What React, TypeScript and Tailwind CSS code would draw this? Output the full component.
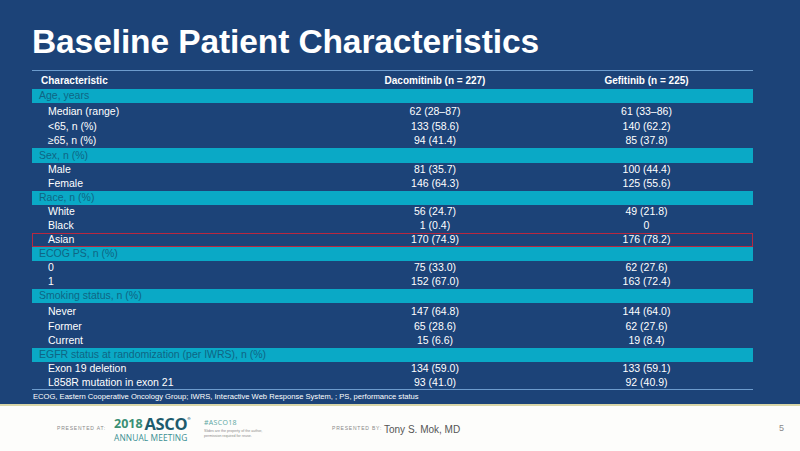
import React from 'react';

type Row =
  | { kind: 'band'; label: string; h: string }
  | { kind: 'row'; label: string; a: string; b: string; h: string; boxed?: boolean };

const rows: Row[] = [
  { kind: 'band', label: 'Age, years', h: 'h-[14px]' },
  { kind: 'row', label: 'Median (range)', a: '62 (28–87)', b: '61 (33–86)', h: 'h-[17px]' },
  { kind: 'row', label: '<65, n (%)', a: '133 (58.6)', b: '140 (62.2)', h: 'h-[14px]' },
  { kind: 'row', label: '≥65, n (%)', a: '94 (41.4)', b: '85 (37.8)', h: 'h-[14px]' },
  { kind: 'band', label: 'Sex, n (%)', h: 'h-[15px]' },
  { kind: 'row', label: 'Male', a: '81 (35.7)', b: '100 (44.4)', h: 'h-[14px]' },
  { kind: 'row', label: 'Female', a: '146 (64.3)', b: '125 (55.6)', h: 'h-[14px]' },
  { kind: 'band', label: 'Race, n (%)', h: 'h-[14px]' },
  { kind: 'row', label: 'White', a: '56 (24.7)', b: '49 (21.8)', h: 'h-[14px]' },
  { kind: 'row', label: 'Black', a: '1 (0.4)', b: '0', h: 'h-[14px]' },
  { kind: 'row', label: 'Asian', a: '170 (74.9)', b: '176 (78.2)', h: 'h-[14px]', boxed: true },
  { kind: 'band', label: 'ECOG PS, n (%)', h: 'h-[14px]' },
  { kind: 'row', label: '0', a: '75 (33.0)', b: '62 (27.6)', h: 'h-[14px]' },
  { kind: 'row', label: '1', a: '152 (67.0)', b: '163 (72.4)', h: 'h-[14px]' },
  { kind: 'band', label: 'Smoking status, n (%)', h: 'h-[14px]' },
  { kind: 'row', label: 'Never', a: '147 (64.8)', b: '144 (64.0)', h: 'h-[17px]' },
  { kind: 'row', label: 'Former', a: '65 (28.6)', b: '62 (27.6)', h: 'h-[14px]' },
  { kind: 'row', label: 'Current', a: '15 (6.6)', b: '19 (8.4)', h: 'h-[14px]' },
  { kind: 'band', label: 'EGFR status at randomization (per IWRS), n (%)', h: 'h-[14px]' },
  { kind: 'row', label: 'Exon 19 deletion', a: '134 (59.0)', b: '133 (59.1)', h: 'h-[14px]' },
  { kind: 'row', label: 'L858R mutation in exon 21', a: '93 (41.0)', b: '92 (40.9)', h: 'h-[13px]' },
];

const App = () => {
  return (
    <div className="w-[800px] h-[451px] flex flex-col overflow-hidden font-['Liberation_Sans',Arial,sans-serif]">
      {/* Slide body */}
      <div className="h-[404px] bg-[#1c4378] pl-[32px] pr-[47px] flex flex-col">
        <h1 className="pt-[25px] h-[58px] text-[33.5px] leading-[33px] font-bold text-white tracking-[-0.1px]">
          Baseline Patient Characteristics
        </h1>

        <div className="mt-[12px] border-t border-[#6d9ccd] border-b flex flex-col">
          {/* Header */}
          <div className="h-[18px] flex items-center text-[10px] font-bold text-white">
            <div className="w-[298px] pl-[9px]">Characteristic</div>
            <div className="w-[210px] text-center">Dacomitinib (n = 227)</div>
            <div className="flex-1 text-center">Gefitinib (n = 225)</div>
          </div>

          {rows.map((r, i) =>
            r.kind === 'band' ? (
              <div
                key={i}
                className={`${r.h} bg-[#0aa9c6] flex items-center pl-[7px] text-[10.5px] text-[#0f6584]`}
              >
                {r.label}
              </div>
            ) : (
              <div
                key={i}
                className={`${r.h} flex items-center text-[10.5px] text-white ${
                  r.boxed ? 'outline outline-1 -outline-offset-1 outline-[#b8283f]' : ''
                }`}
              >
                <div className="w-[298px] pl-[16px]">{r.label}</div>
                <div className="w-[210px] text-center">{r.a}</div>
                <div className="flex-1 text-center">{r.b}</div>
              </div>
            )
          )}
        </div>

        <p className="h-[14px] flex items-center text-[7.6px] text-white pl-[1px]">
          ECOG, Eastern Cooperative Oncology Group; IWRS, Interactive Web Response System, ; PS, performance status
        </p>
      </div>

      {/* Footer strip */}
      <div className="h-[2px] bg-[#d9d6a8]" />
      <div className="flex-1 bg-[#fdfdfb] flex items-center pl-[57px] pt-[1px]">
        <span className="w-[57px] text-[5px] tracking-[0.8px] text-[#8a8a8a]">PRESENTED AT:</span>
        <div className="w-[90px] flex flex-col">
          <div className="flex items-end h-[14px] leading-none font-['Open_Sans',sans-serif] font-bold">
            <span className="text-[12.5px] text-[#3b8f74]">2018</span>
            <span className="ml-[2px] text-[16.5px] text-[#1d5b6d] tracking-[-0.4px] leading-[14px]">ASCO</span>
            <span className="text-[4px] text-[#1d5b6d] self-start">®</span>
          </div>
          <span className="text-[8.4px] leading-[9px] mt-[2px] text-[#3a8f92] font-['Open_Sans',sans-serif] tracking-[0.1px]">
            ANNUAL MEETING
          </span>
        </div>
        <div className="w-[128px] flex flex-col">
          <span className="text-[7px] leading-none text-[#5aa7a2] tracking-[0.3px] font-['Open_Sans',sans-serif]">#ASCO18</span>
          <span className="mt-[3px] text-[3.6px] leading-[5px] text-[#8a8a8a]">
            Slides are the property of the author,
            <br />
            permission required for reuse.
          </span>
        </div>
        <span className="w-[52px] text-[5px] tracking-[0.8px] text-[#8a8a8a]">PRESENTED BY:</span>
        <span className="text-[10px] text-[#555]">Tony S. Mok, MD</span>
        <span className="ml-auto mr-[16px] text-[9px] text-[#8a8a8a]">5</span>
      </div>
    </div>
  );
};

export default App;
